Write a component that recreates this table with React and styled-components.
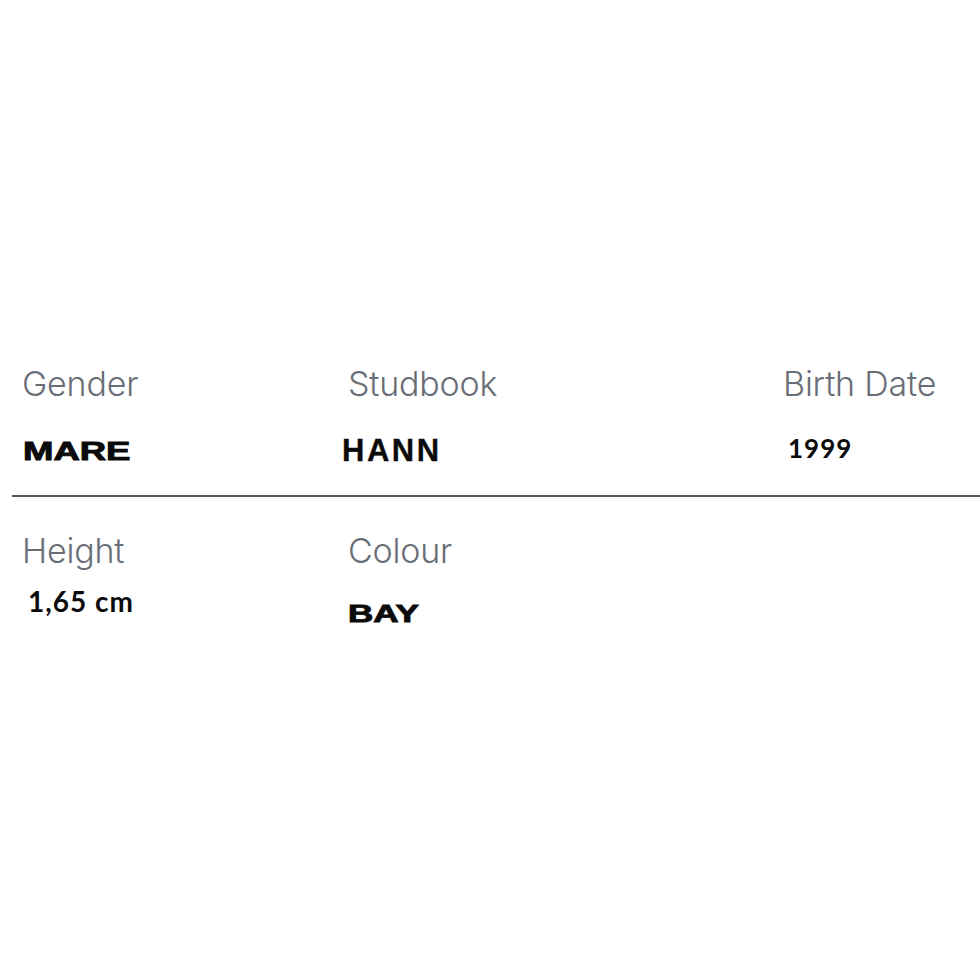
import React from "react";
import styled, { createGlobalStyle } from "styled-components";

const Global = createGlobalStyle`
  html, body { margin: 0; padding: 0; background: #fff; }
  body { width: 980px; height: 980px; overflow: hidden; }
`;

const Page = styled.div`
  padding: 364px 0 0 12px;
`;

const Row = styled.div`
  display: grid;
  grid-template-columns: 326px 435px 1fr;
  padding-left: 10px;
  padding-bottom: ${(p) => p.$padBottom || 0}px;
  border-bottom: ${(p) => (p.$divider ? "2px solid #555" : "none")};
  margin-top: ${(p) => p.$top || 0}px;
`;

const Cell = styled.div`
  display: flex;
  flex-direction: column;
  align-items: flex-start;
  min-height: 1px;
`;

const Label = styled.div`
  font-family: Inter, "Liberation Sans", sans-serif;
  font-weight: 300;
  font-size: 34px;
  line-height: 40px;
  color: #696e76;
  letter-spacing: -0.2px;
`;

const Extended = styled.div`
  font-family: "Liberation Sans", Arial, sans-serif;
  font-weight: 700;
  font-size: ${(p) => p.$size}px;
  line-height: ${(p) => p.$size}px;
  color: #0b0b0b;
  -webkit-text-stroke: 0.9px #0b0b0b;
  transform: scaleX(1.46);
  transform-origin: left center;
  margin-top: ${(p) => p.$top}px;
  margin-left: ${(p) => p.$left || 0}px;
`;

const Plain = styled.div`
  font-family: "Liberation Sans", Arial, sans-serif;
  font-weight: 700;
  font-size: 31px;
  line-height: 31px;
  letter-spacing: 2.5px;
  color: #0b0b0b;
  -webkit-text-stroke: 0.3px #0b0b0b;
  margin-top: ${(p) => p.$top}px;
  margin-left: ${(p) => p.$left || 0}px;
`;

const Numeric = styled.div`
  font-family: Lato, "Open Sans", sans-serif;
  font-weight: 700;
  font-size: ${(p) => p.$size}px;
  line-height: ${(p) => p.$size}px;
  letter-spacing: 1px;
  color: #0b0b0b;
  margin-top: ${(p) => p.$top}px;
  margin-left: ${(p) => p.$left || 0}px;
`;

export default function App() {
  return (
    <>
      <Global />
      <Page>
        <Row $divider $padBottom={29}>
          <Cell>
            <Label>Gender</Label>
            <Extended $size={25} $top={35} $left={1}>MARE</Extended>
          </Cell>
          <Cell>
            <Label>Studbook</Label>
            <Plain $top={31} $left={-6}>HANN</Plain>
          </Cell>
          <Cell>
            <Label>Birth Date</Label>
            <Numeric $size={26} $top={31} $left={5}>1999</Numeric>
          </Cell>
        </Row>
        <Row $top={34}>
          <Cell>
            <Label>Height</Label>
            <Numeric $size={28} $top={16} $left={6}>1,65 cm</Numeric>
          </Cell>
          <Cell>
            <Label>Colour</Label>
            <Extended $size={24} $top={31} $left={0}>BAY</Extended>
          </Cell>
          <Cell />
        </Row>
      </Page>
    </>
  );
}
